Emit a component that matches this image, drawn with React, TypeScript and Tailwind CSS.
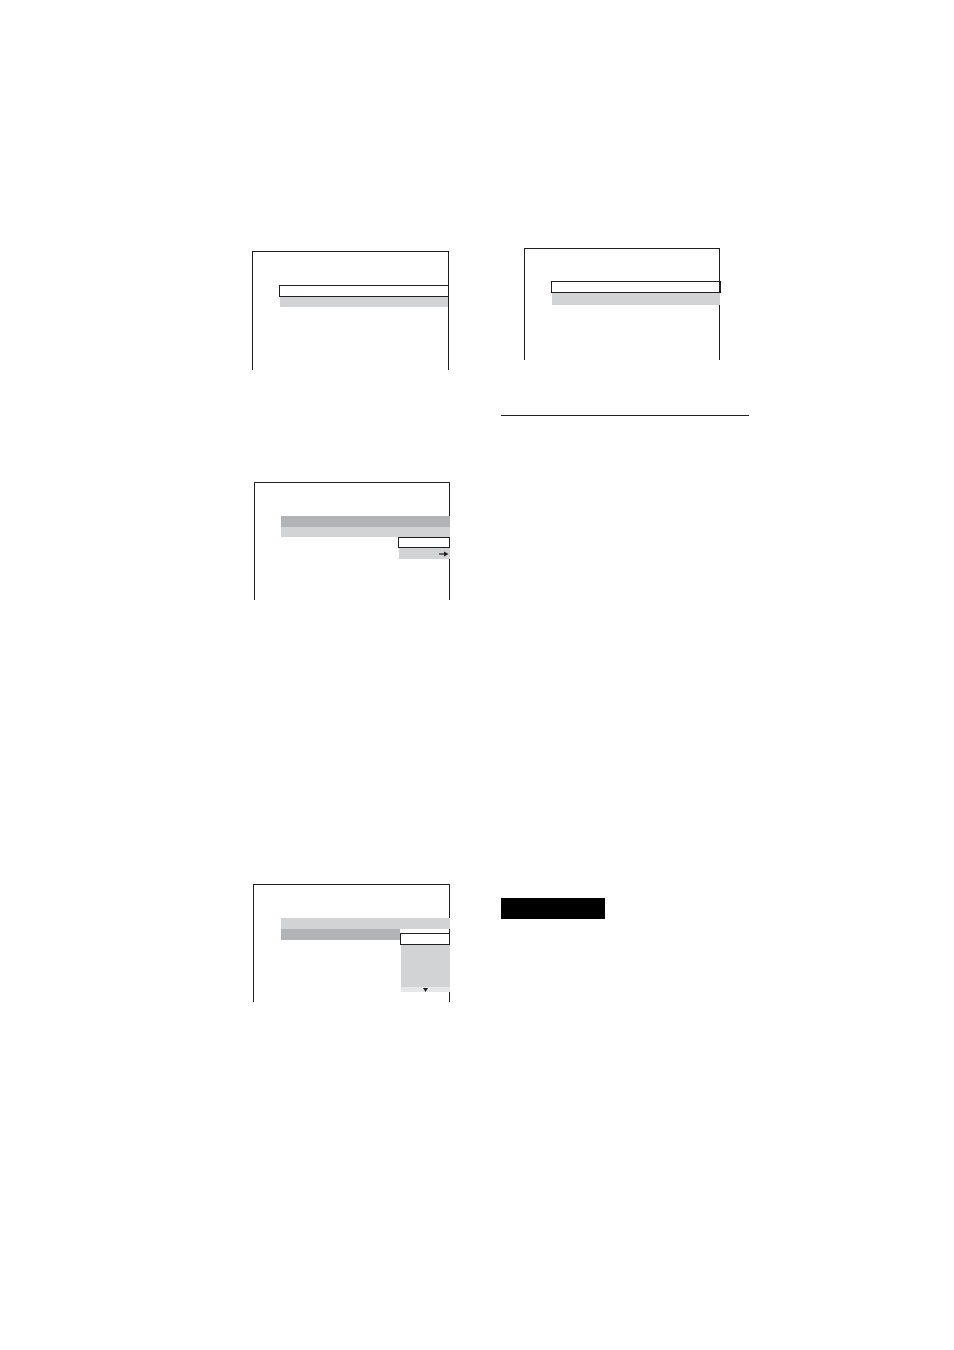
import React from 'react';

const LIGHT = 'bg-[#d1d3d4]';
const DARK = 'bg-[#b1b3b6]';

const ArrowRight: React.FC = () => (
  <svg width="10" height="6" viewBox="0 0 10 6" className="mr-[1px]">
    <line x1="0" y1="3" x2="7" y2="3" stroke="#231f20" strokeWidth="1.2" />
    <path d="M5 0.5 L9.5 3 L5 5.5 Z" fill="#231f20" />
  </svg>
);

const TriangleDown: React.FC = () => (
  <svg width="5" height="4" viewBox="0 0 5 4">
    <path d="M0 0 L5 0 L2.5 4 Z" fill="#231f20" />
  </svg>
);

export default function App() {
  return (
    <div className="w-[954px] h-[1350px] bg-white flex">
      {/* left column */}
      <div className="flex flex-col w-[249px] ml-[252px]">
        {/* screen 1 */}
        <div className="mt-[251px] w-[197px] h-[119px] border border-b-0 border-[#231f20] flex flex-col">
          <div className="mt-[33px] ml-[26px] -mr-px h-[12px] border border-[#231f20]" />
          <div className={`ml-[27px] h-[10px] ${LIGHT}`} />
        </div>

        {/* screen 3 */}
        <div className="mt-[112px] ml-[2px] w-[196px] h-[118px] border border-b-0 border-[#231f20] flex flex-col">
          <div className={`mt-[33px] ml-[26px] -mr-px h-[11px] ${DARK}`} />
          <div className={`ml-[26px] -mr-px h-[10px] ${LIGHT}`} />
          <div className="self-end -mr-px w-[52px] h-[11px] border border-[#231f20]" />
          <div className={`self-end -mr-px w-[51px] h-[11px] ${LIGHT} flex items-center justify-end`}>
            <ArrowRight />
          </div>
        </div>

        {/* screen 4 */}
        <div className="mt-[284px] ml-[1px] w-[197px] h-[118px] border border-b-0 border-[#231f20] flex flex-col">
          <div className={`mt-[33px] ml-[27px] -mr-px h-[11px] ${LIGHT}`} />
          <div className="flex ml-[27px] -mr-px">
            <div className={`w-[119px] h-[11px] ${DARK}`} />
            <div className="flex-1 flex flex-col">
              <div className="mt-[4px] h-[12px] border border-[#231f20]" />
              <div className={`ml-px h-[42px] ${LIGHT}`} />
              <div className="ml-px h-[5px] bg-[#e6e7e8] flex items-center justify-center">
                <TriangleDown />
              </div>
            </div>
          </div>
        </div>
      </div>

      {/* right column */}
      <div className="flex flex-col w-[260px]">
        {/* screen 2 */}
        <div className="mt-[248px] ml-[23px] w-[196px] h-[112px] border border-b-0 border-[#231f20] flex flex-col">
          <div className="mt-[32px] ml-[26px] -mr-[2px] h-[12px] border border-[#231f20]" />
          <div className={`ml-[27px] -mr-px h-[12px] ${LIGHT}`} />
        </div>

        <div className="mt-[55px] w-[248px] h-px bg-[#231f20]" />

        <div className="mt-[482px] w-[104px] h-[21px] bg-black" />
      </div>
    </div>
  );
}
